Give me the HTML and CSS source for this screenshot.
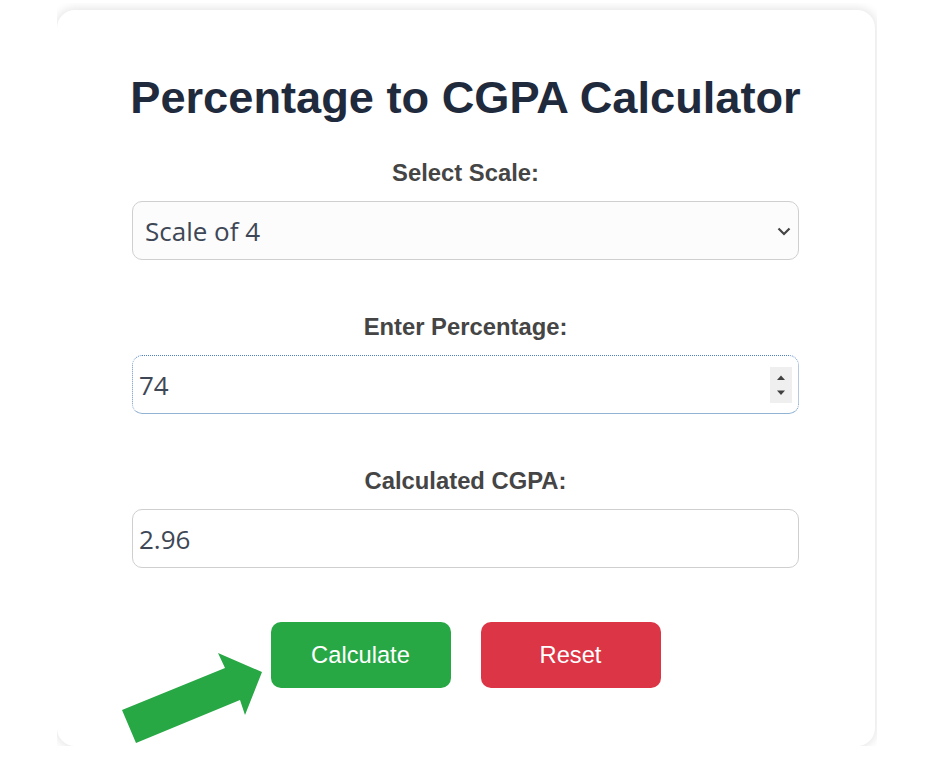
FILE: index.html
```html
<!DOCTYPE html>
<html>
<head>
<meta charset="UTF-8">
<title>Percentage to CGPA Calculator</title>
<link rel="stylesheet" href="styles.css">
</head>
<body>
<div class="frame">
  <div class="card">
    <h1>Percentage to CGPA Calculator</h1>

    <div class="field">
      <label for="scale">Select Scale:</label>
      <div class="box-wrap">
        <select id="scale" class="box select-box">
          <option>Scale of 4</option>
          <option>Scale of 5</option>
          <option>Scale of 10</option>
        </select>
        <svg class="chevron" width="14" height="9" viewBox="0 0 14 9">
          <polyline points="1.5,1.5 7,7 12.5,1.5" fill="none" stroke="#454545" stroke-width="2.2"/>
        </svg>
      </div>
    </div>

    <div class="field">
      <label for="percentage">Enter Percentage:</label>
      <div class="box-wrap">
        <input id="percentage" class="box focused" type="number" value="74">
        <div class="spinner">
          <svg width="22" height="36" viewBox="0 0 22 36">
            <polygon points="7,13 15,13 11,8.5" fill="#404040"/>
            <polygon points="7,23.5 15,23.5 11,28" fill="#404040"/>
          </svg>
        </div>
      </div>
    </div>

    <div class="field">
      <label for="cgpa">Calculated CGPA:</label>
      <div class="box-wrap">
        <input id="cgpa" class="box" type="text" value="2.96" readonly>
      </div>
    </div>

    <div class="buttons">
      <button class="btn btn-calc">Calculate</button>
      <button class="btn btn-reset">Reset</button>
    </div>
  </div>
</div>

<svg class="pointer" width="150" height="100" viewBox="0 0 150 100">
  <polygon points="4,62 107,20 100,5 144,24 127,67 122,52 18,95" fill="#28a745"/>
</svg>
</body>
</html>
```

FILE: styles.css
```css
body {
  margin: 0;
  background: #fff;
  font-family: "Liberation Sans", Arial, sans-serif;
  position: relative;
}

.frame {
  width: 820px;
  height: 743px;
  margin: 3px 0 0 57px;
  overflow: hidden;
}

.card {
  background: #fff;
  width: 818px;
  height: 736px;
  margin-top: 7px;
  border-radius: 18px;
  box-shadow: 0 0 10px 2px rgba(0, 0, 0, 0.1);
  padding: 62px 76px 0 75px;
  box-sizing: border-box;
}

h1 {
  margin: 0 -30px 36px;
  white-space: nowrap;
  font-size: 45.2px;
  line-height: 52px;
  text-align: center;
  color: #1f2a3c;
}

.field {
  margin-bottom: 54px;
}

label {
  display: block;
  text-align: center;
  font-weight: bold;
  font-size: 23.8px;
  line-height: 26px;
  color: #454545;
  margin-bottom: 15px;
}

.box-wrap {
  position: relative;
}

.box {
  display: block;
  width: 100%;
  height: 59px;
  box-sizing: border-box;
  border: 1px solid #cfcfcf;
  border-radius: 10px;
  background: #fff;
  padding: 0 6px;
  font-family: "Open Sans", "Noto Sans", sans-serif;
  font-size: 26px;
  color: #3e4756;
  outline: none;
}

.select-box {
  -webkit-appearance: none;
  appearance: none;
  background: #fcfcfc;
  padding-left: 12px;
}

.chevron {
  position: absolute;
  right: 8px;
  top: 26px;
}

.focused {
  border-style: dotted dotted solid dotted;
  border-color: #4f7fbf #6d95c6 #93b3d2 #6d95c6;
}

input[type=number]::-webkit-inner-spin-button,
input[type=number]::-webkit-outer-spin-button {
  -webkit-appearance: none;
  margin: 0;
}

.spinner {
  position: absolute;
  right: 7px;
  top: 12px;
  width: 22px;
  height: 36px;
  background: #efefef;
}

.spinner svg {
  display: block;
}

.buttons {
  display: flex;
  justify-content: center;
  gap: 30px;
}

.btn {
  width: 180px;
  height: 66px;
  border: none;
  border-radius: 10px;
  color: #fff;
  font-family: "Liberation Sans", Arial, sans-serif;
  font-size: 23.7px;
  cursor: pointer;
}

.btn-calc {
  background: #28a745;
}

.btn-reset {
  background: #dc3545;
}

.pointer {
  position: absolute;
  left: 118px;
  top: 648px;
}
```
